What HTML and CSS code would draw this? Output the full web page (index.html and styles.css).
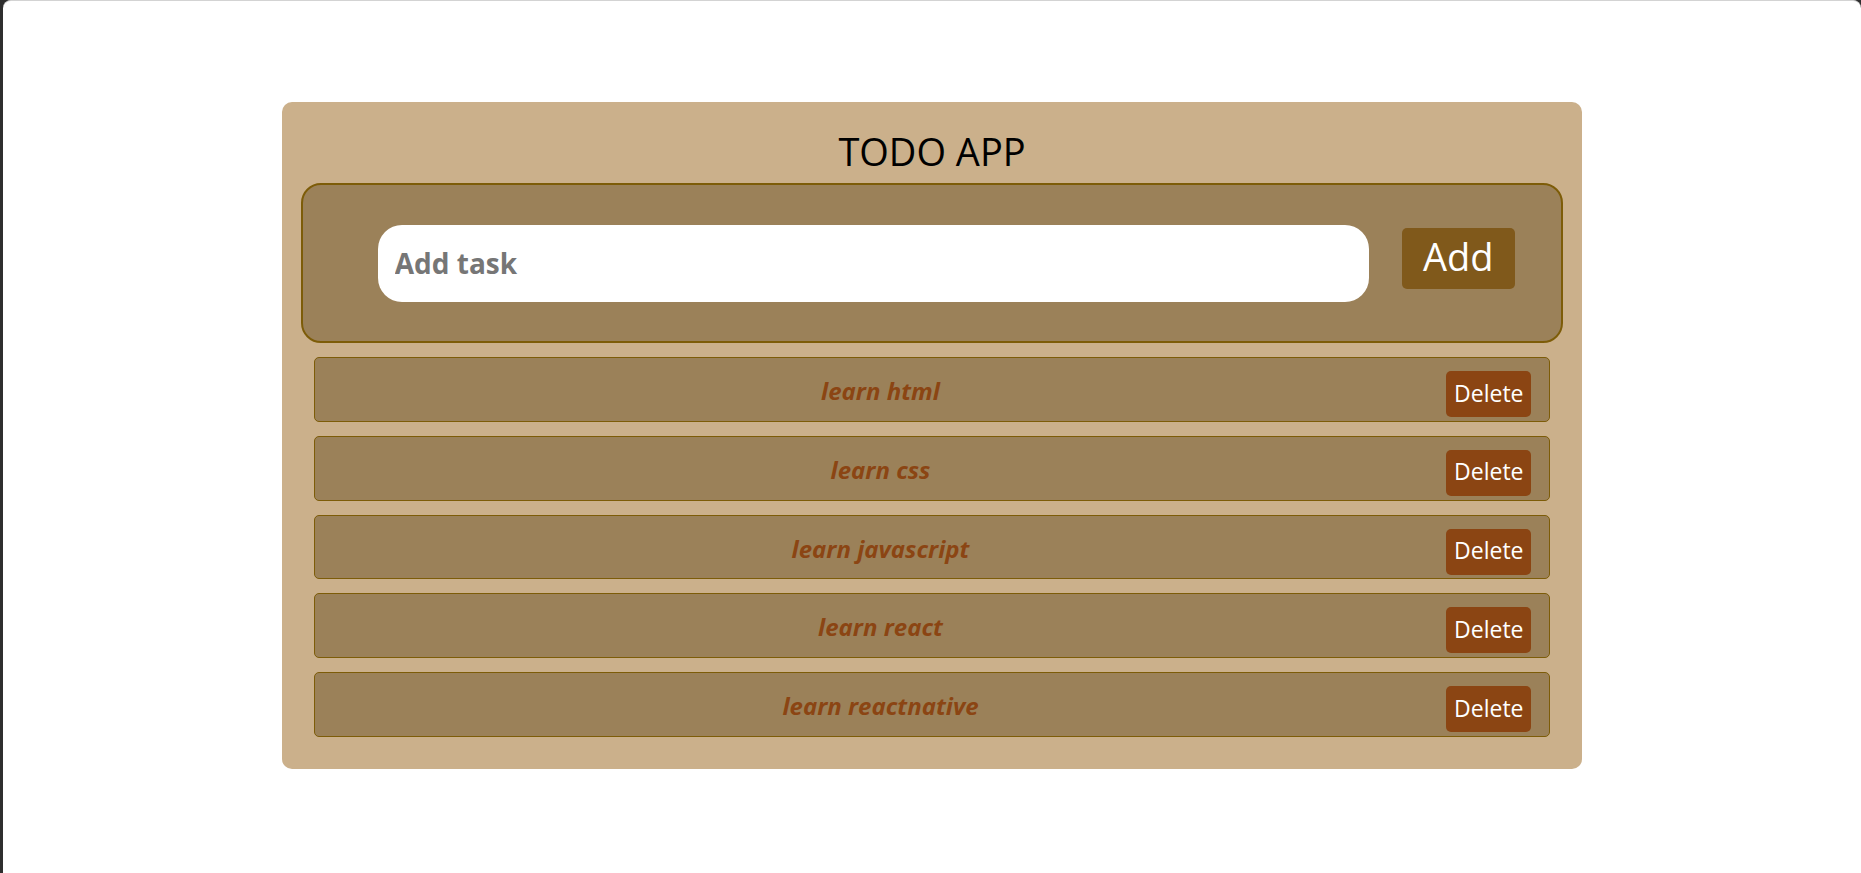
FILE: index.html
```html
<!DOCTYPE html>
<html lang="en">
<head>
<meta charset="utf-8">
<title>TODO APP</title>
<link rel="stylesheet" href="styles.css">
</head>
<body>
<div class="window">
  <div class="card">
    <h1 class="title">TODO APP</h1>
    <div class="entry">
      <input class="task-input" type="text" placeholder="Add task">
      <button class="add-btn">Add</button>
    </div>
    <ul class="list">
      <li class="row"><span class="task">learn html</span><button class="del-btn">Delete</button></li>
      <li class="row"><span class="task">learn css</span><button class="del-btn">Delete</button></li>
      <li class="row"><span class="task">learn javascript</span><button class="del-btn">Delete</button></li>
      <li class="row"><span class="task">learn react</span><button class="del-btn">Delete</button></li>
      <li class="row"><span class="task">learn reactnative</span><button class="del-btn">Delete</button></li>
    </ul>
  </div>
</div>
</body>
</html>
```
FILE: styles.css
```css
html, body {
  margin: 0;
  padding: 0;
  height: 100%;
  background: #2e2e2e;
  overflow: hidden;
}
.window {
  margin-left: 3px;
  height: 100%;
  box-sizing: border-box;
  background: #ffffff;
  border-top: 1px solid #d3d3d3;
  border-radius: 8px 8px 0 0;
  padding-top: 101px;
  font-family: "Open Sans", "Noto Sans", sans-serif;
}
.card {
  width: 70%;
  margin: 0 auto;
  box-sizing: border-box;
  background: #cbb08b;
  border-radius: 10px;
  padding: 0 19px 32px;
}
.title {
  margin: 0;
  padding-top: 29px;
  height: 81px;
  box-sizing: border-box;
  text-align: center;
  font-size: 38px;
  font-weight: 400;
  line-height: 40px;
  color: #000;
}
.entry {
  display: flex;
  align-items: center;
  height: 160px;
  box-sizing: border-box;
  border: 2px solid #7d5c08;
  border-radius: 20px;
  background: #9b8159;
  padding-left: 75px;
  gap: 33px;
}
.task-input {
  width: 991px;
  height: 77px;
  box-sizing: border-box;
  border: none;
  outline: none;
  border-radius: 24px;
  background: #fff;
  padding: 0 0 0 17px;
  font-family: "Open Sans", "Noto Sans", sans-serif;
  font-size: 28px;
  font-weight: 700;
  color: #333;
}
.task-input::placeholder {
  color: #767676;
}
.add-btn {
  width: 113px;
  height: 61px;
  margin-bottom: 10px;
  border: none;
  border-radius: 5px;
  background: #80591b;
  color: #fff;
  font-family: "Open Sans", "Noto Sans", sans-serif;
  font-size: 38px;
  line-height: 1;
  padding: 0 0 4px;
}
.list {
  list-style: none;
  margin: 14px 13px 0;
  padding: 0;
  display: flex;
  flex-direction: column;
  gap: 14px;
}
.row {
  display: flex;
  align-items: flex-start;
  height: 64.75px;
  box-sizing: border-box;
  border: 1px solid #7d5c08;
  border-radius: 5px;
  background: #9b8159;
  padding: 13px 18px 0 0;
}
.task {
  flex: 1;
  text-align: center;
  font-size: 24px;
  font-weight: 700;
  font-style: italic;
  color: #8b4513;
  line-height: 40px;
}
.del-btn {
  width: 85px;
  height: 46px;
  border: none;
  border-radius: 5px;
  background: #8b4513;
  color: #fff;
  font-family: "Open Sans", "Noto Sans", sans-serif;
  font-size: 23px;
  padding: 0 0 2px;
  line-height: 1;
}
```
